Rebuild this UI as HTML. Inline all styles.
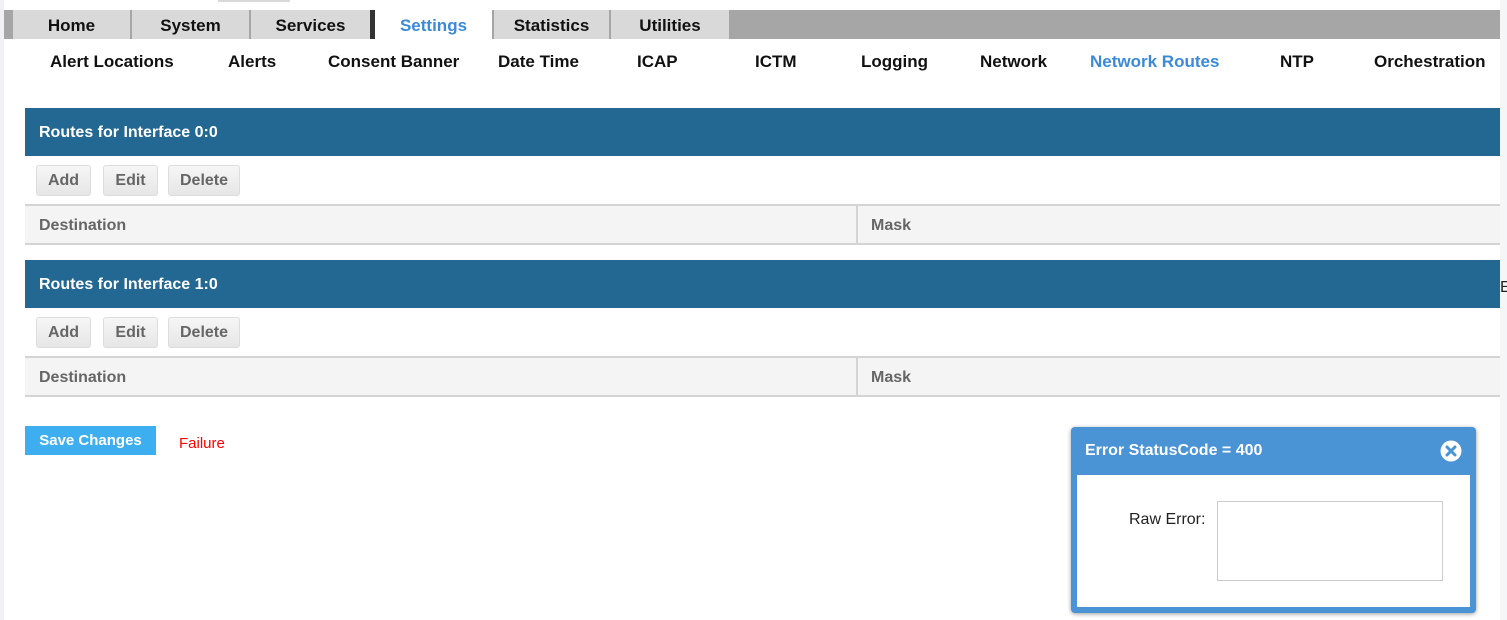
<!DOCTYPE html>
<html><head><style>
*{box-sizing:border-box;margin:0;padding:0}
body{width:1507px;height:620px;overflow:hidden;background:#fff;font-family:"Liberation Sans",Arial,sans-serif;position:relative}
.abs{position:absolute}
.tabbar{left:4px;top:10px;width:1496px;height:29px;background:#a6a6a6}
.tab{position:absolute;top:10px;height:29px;background:#d9d9d9;font-weight:bold;font-size:17px;color:#111;text-align:center;line-height:31px}
.sub{position:absolute;top:52px;font-weight:bold;font-size:17px;color:#111}
.hdr{left:25px;width:1475px;height:48px;background:#236892;color:#fff;font-weight:bold;font-size:16px;padding-left:14px;line-height:50px}
.btn{position:absolute;height:31px;border:1px solid #ddd;border-radius:3px;background:linear-gradient(#f6f6f6,#e6e6e6);color:#666;font-weight:bold;font-size:16px;text-align:center;line-height:30px}
.th{left:25px;width:1475px;height:41px;background:#f4f4f4;border-top:2px solid #d4d4d4;border-bottom:2px solid #d4d4d4;color:#666;font-weight:bold;font-size:16px;line-height:39px}
.th span{position:absolute;top:0}
.th i{position:absolute;left:831px;top:0;bottom:0;border-left:2px solid #d4d4d4}
</style></head><body>
<div class="abs" style="left:0;top:0;width:4px;height:620px;background:#f0f1f4"></div>
<div class="abs" style="left:1500px;top:0;width:7px;height:620px;background:#f5f6f8"></div>
<div class="abs" style="left:218px;top:0;width:72px;height:2px;background:#d9d9d9"></div>
<div class="abs tabbar"></div>
<div class="tab" style="left:13px;width:117px">Home</div>
<div class="tab" style="left:132px;width:117px">System</div>
<div class="tab" style="left:251px;width:119px">Services</div>
<div class="abs" style="left:370px;top:10px;width:5px;height:29px;background:#333"></div>
<div class="tab" style="left:375px;width:117px;background:#fff;color:#3b8ad9">Settings</div>
<div class="tab" style="left:494px;width:115px">Statistics</div>
<div class="tab" style="left:611px;width:118px">Utilities</div>
<div class="sub" style="left:50px">Alert Locations</div>
<div class="sub" style="left:228px">Alerts</div>
<div class="sub" style="left:328px">Consent Banner</div>
<div class="sub" style="left:498px">Date Time</div>
<div class="sub" style="left:637px">ICAP</div>
<div class="sub" style="left:755px">ICTM</div>
<div class="sub" style="left:861px">Logging</div>
<div class="sub" style="left:980px">Network</div>
<div class="sub" style="left:1090px;color:#3b8ad9">Network Routes</div>
<div class="sub" style="left:1280px">NTP</div>
<div class="sub" style="left:1374px">Orchestration</div>

<div class="abs hdr" style="top:108px">Routes for Interface 0:0</div>
<div class="btn" style="left:36px;top:165px;width:55px">Add</div>
<div class="btn" style="left:103px;top:165px;width:55px">Edit</div>
<div class="btn" style="left:168px;top:165px;width:72px">Delete</div>
<div class="abs th" style="top:204px"><span style="left:14px">Destination</span><i></i><span style="left:846px">Mask</span></div>

<div class="abs hdr" style="top:260px">Routes for Interface 1:0</div>
<div class="btn" style="left:36px;top:317px;width:55px">Add</div>
<div class="btn" style="left:103px;top:317px;width:55px">Edit</div>
<div class="btn" style="left:168px;top:317px;width:72px">Delete</div>
<div class="abs th" style="top:356px"><span style="left:14px">Destination</span><i></i><span style="left:846px">Mask</span></div>
<div class="abs" style="left:1500px;top:279px;font-size:16px;color:#222">E</div>

<div class="abs" style="left:25px;top:426px;width:131px;height:29px;background:#3daef0;color:#fff;font-weight:bold;font-size:15px;text-align:center;line-height:29px">Save Changes</div>
<div class="abs" style="left:179px;top:435px;color:#f00;font-size:15px">Failure</div>

<div class="abs" style="left:1071px;top:427px;width:405px;height:186px;background:#4a93d4;border-radius:4px;box-shadow:0 1px 4px rgba(0,0,0,.4)">
<div class="abs" style="left:14px;top:15px;color:#fff;font-weight:bold;font-size:16px">Error StatusCode = 400</div>
<svg class="abs" style="left:369px;top:13px" width="22" height="22" viewBox="0 0 22 22"><circle cx="11" cy="11" r="10.5" fill="#fff"/><path d="M7 7L15 15M15 7L7 15" stroke="#4a93d4" stroke-width="3" stroke-linecap="round"/></svg>
<div class="abs" style="left:6px;top:48px;width:393px;height:132px;background:#fff">
<div class="abs" style="left:52px;top:36px;font-size:16px;color:#222">Raw Error:</div>
<div class="abs" style="left:140px;top:26px;width:226px;height:80px;border:1px solid #ccc"></div>
</div></div>
</body></html>
